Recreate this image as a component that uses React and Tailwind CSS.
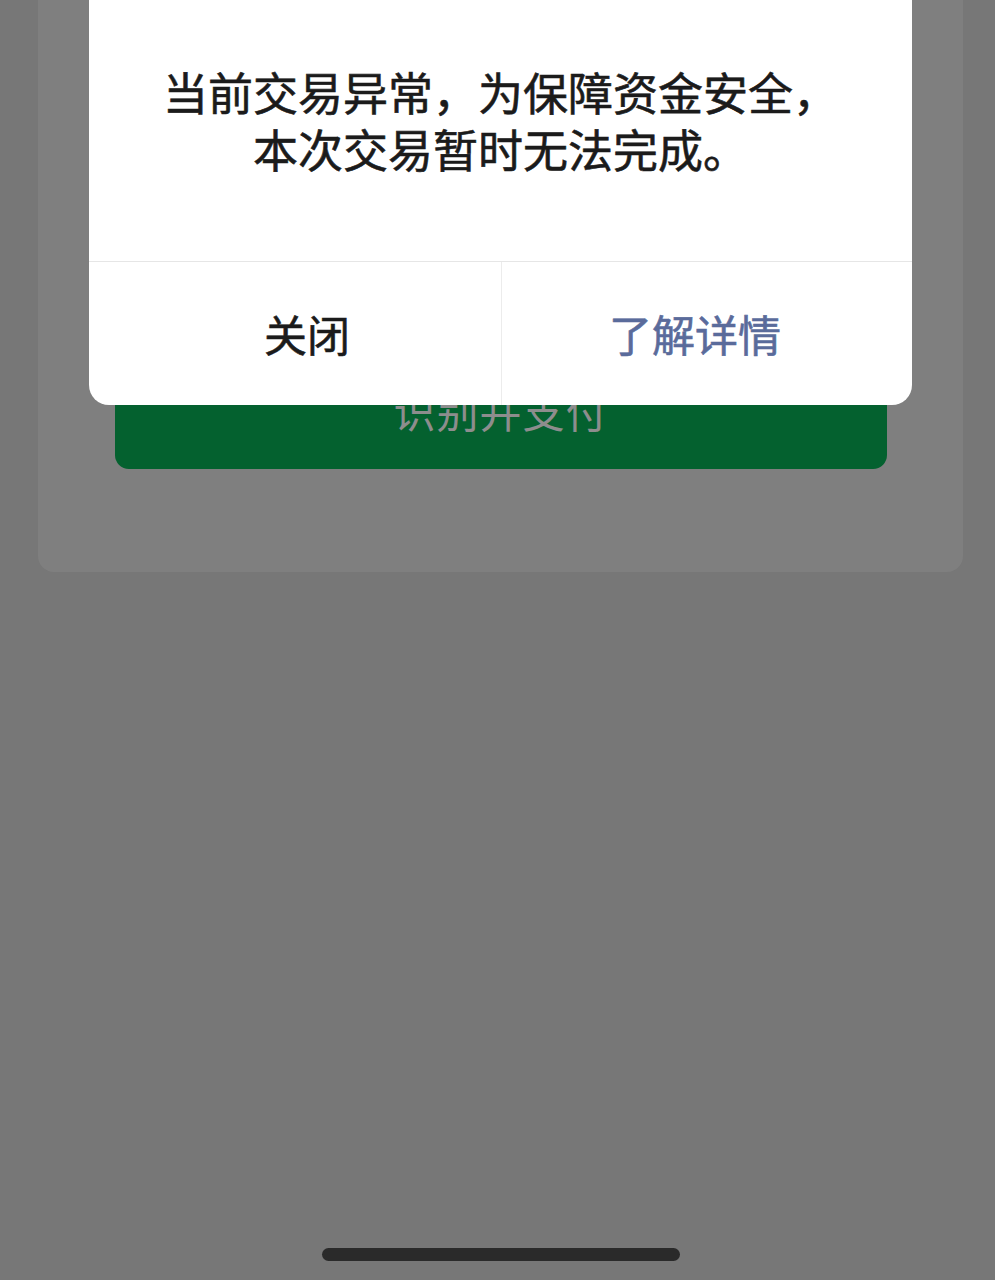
export default function App() {
  return (
    <div
      className="relative w-[995px] h-[1280px] overflow-hidden bg-[#777777]"
      style={{ fontFamily: '"Noto Sans CJK SC", "Noto Sans", sans-serif' }}
    >
      {/* Payment sheet, dimmed behind the overlay */}
      <div className="ml-[38px] mt-[-40px] h-[612px] w-[925px] rounded-b-[16px] bg-[#7f7f7f] pl-[77px] pr-[76px] pt-[391px]">
        <div className="flex h-[118px] items-center justify-center rounded-[14px] bg-[#04612f]">
          <span className="text-[42px] leading-none text-[#8d8d8d] tracking-[1px]">识别并支付</span>
        </div>
      </div>

      {/* Alert dialog */}
      <div className="absolute left-[89px] top-[-40px] w-[823px] overflow-hidden rounded-[20px] bg-white">
        <div className="flex h-[301px] flex-col items-center pt-[103px]">
          <p className="text-center text-[45px] leading-[57px] text-[#1b1b1b] [-webkit-text-stroke:0.6px_#1b1b1b]">
            当前交易异常，为保障资金安全，
            <br />
            本次交易暂时无法完成。
          </p>
        </div>
        <div className="flex h-[144px] border-t border-[#e6e6e6]">
          <button className="flex w-[412px] items-center justify-center pl-[24px] text-[43px] leading-none text-[#1b1b1b] [-webkit-text-stroke:0.6px_#1b1b1b]">
            关闭
          </button>
          <div className="w-px bg-[#ececec]" />
          <button className="flex flex-1 items-center justify-center pr-[24px] text-[43px] leading-none text-[#5a6b9b] [-webkit-text-stroke:0.6px_#5a6b9b]">
            了解详情
          </button>
        </div>
      </div>

      {/* Home indicator */}
      <div className="absolute bottom-[19px] left-[322px] h-[13px] w-[358px] rounded-full bg-[#2a2a2a]" />
    </div>
  )
}
